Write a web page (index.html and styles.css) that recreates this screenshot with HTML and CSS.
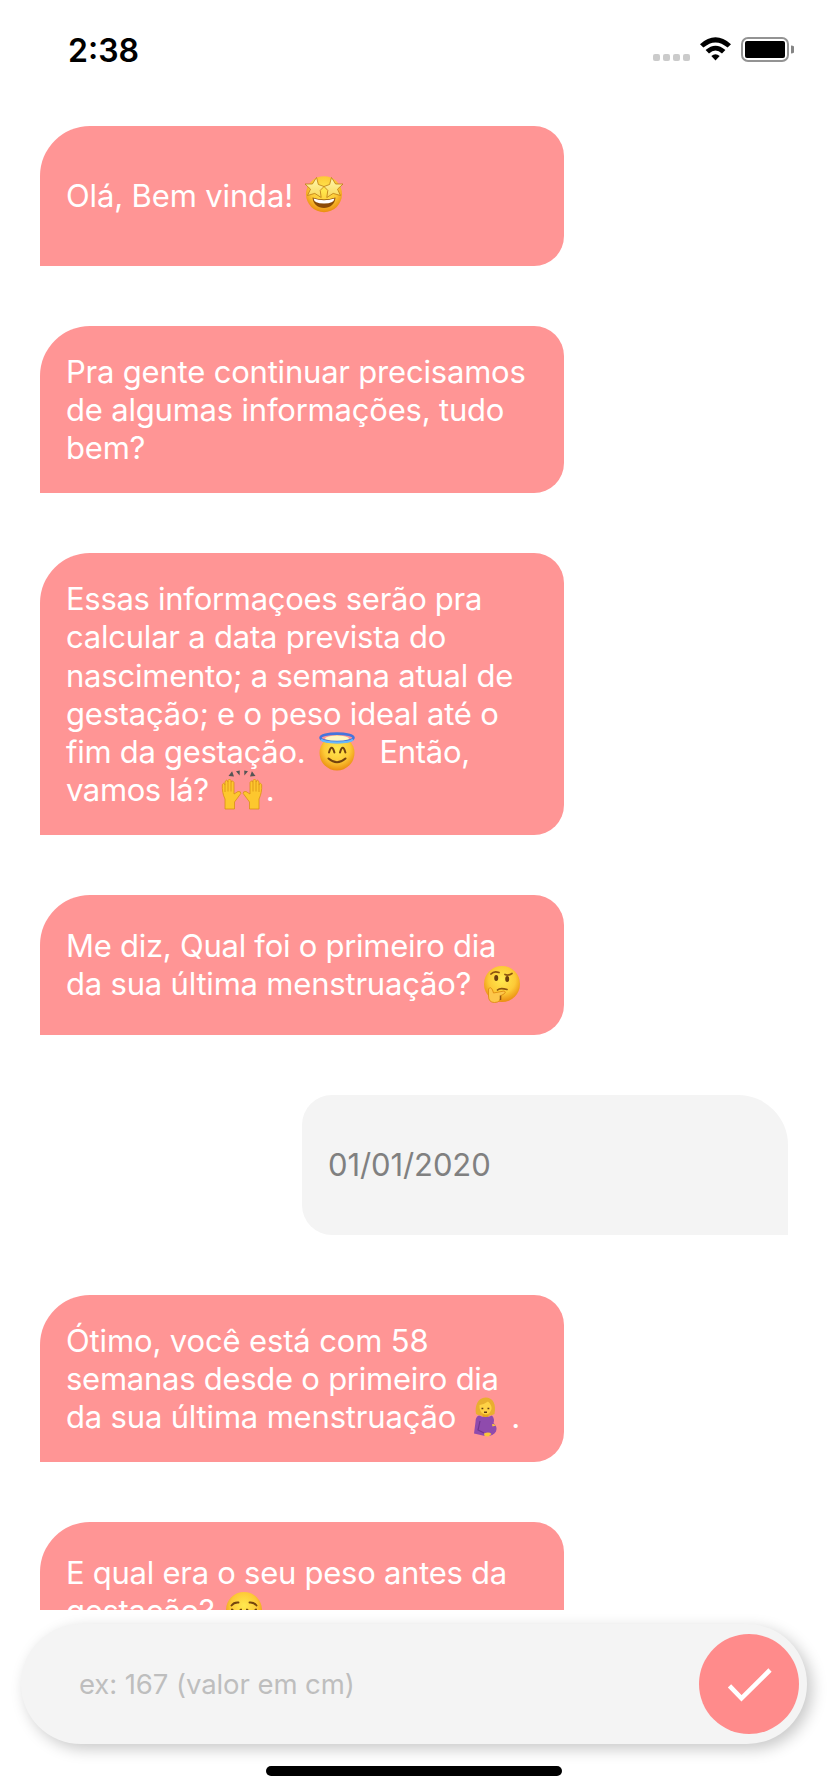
FILE: index.html
```html
<!DOCTYPE html>
<html lang="pt-BR">
<head>
<meta charset="utf-8">
<title>Chat</title>
<link rel="stylesheet" href="styles.css">
</head>
<body>
<div class="screen">
  <header class="status">
    <span class="time">2:38</span>
    <svg class="status-icons" width="142" height="28" viewBox="0 0 142 28">
      <g fill="#cbcbcb"><rect x="1" y="18" width="7" height="7" rx="2"/><rect x="11" y="18" width="7" height="7" rx="2"/><rect x="21" y="18" width="7" height="7" rx="2"/><rect x="31" y="18" width="7" height="7" rx="2"/></g>
      <path d="M48 8.2Q63.500 -5.600 79 8.200L75.600 11.600Q63.500 1.200 51.400 11.600Z" fill="#000"/>
      <path d="M53.600 14Q63.500 5.400 73.400 14L70 17.400Q63.500 11.800 57 17.400Z" fill="#000"/>
      <path d="M59.300 20Q63.500 16.400 67.700 20L63.500 24.400Z" fill="#000"/>
      <rect x="90" y="2" width="46" height="23" rx="6" fill="none" stroke="#939393" stroke-width="2"/>
      <rect x="93" y="5" width="40" height="17" rx="2" fill="#000"/>
      <path d="M139 9.500a4 4 0 0 1 0 8z" fill="#858585"/>
    </svg>
  </header>

  <main class="chat">
    <div class="bubble bot">
      <p class="line"><span class="l1">Olá, Bem vinda!</span><svg class="emoji e-star" viewBox="0 0 40 40" role="img" aria-label="🤩">
        <defs><radialGradient id="face" cx=".5" cy=".38" r=".62"><stop offset="0" stop-color="#ffe94f"/><stop offset=".6" stop-color="#fdca37"/><stop offset="1" stop-color="#ea8d10"/></radialGradient>
        <linearGradient id="star" x1="0" y1="0" x2="0" y2="1"><stop offset="0" stop-color="#fff9b0"/><stop offset="1" stop-color="#f9d858"/></linearGradient></defs>
        <circle cx="20" cy="18.200" r="18" fill="url(#face)"/>
        <path d="M8.500 21.500Q20 25.500 31.500 21.500C31 28 26 32 20 32S9 28 8.500 21.500Z" fill="#8b4b07"/>
        <path d="M9.500 22.600Q20 26 30.500 22.600Q30 27.600 20 27.600T9.500 22.600Z" fill="#fff"/>
        <path d="M12.500 1.500L14.400 8.500L20 10.500L16.200 14.400L17.200 21.500L10.800 17.400L3.500 19.500L6.500 13.200L1 8L8.400 8Z" fill="url(#star)" stroke="#bd7b12" stroke-width=".8"/>
        <path d="M27.500 1.500L25.600 8.500L20 10.500L23.800 14.400L22.800 21.500L29.200 17.400L36.500 19.500L33.500 13.200L39 8L31.600 8Z" fill="url(#star)" stroke="#bd7b12" stroke-width=".8"/>
      </svg></p>
    </div>

    <div class="bubble bot tall3">
      <p class="line l2">Pra gente continuar precisamos</p>
      <p class="line l3">de algumas informações, tudo</p>
      <p class="line l4">bem?</p>
    </div>

    <div class="bubble bot tall6">
      <p class="line l5">Essas informaçoes serão pra</p>
      <p class="line l6">calcular a data prevista do</p>
      <p class="line l7">nascimento; a semana atual de</p>
      <p class="line l8">gestação; e o peso ideal até o</p>
      <p class="line"><span class="l9">fim da gestação.</span><svg class="emoji e-halo" viewBox="0 0 40 40" role="img" aria-label="😇">
        <circle cx="20" cy="21" r="17.500" fill="url(#face)"/>
        <ellipse cx="20" cy="6.500" rx="12" ry="3" fill="#fff6c0"/>
        <ellipse cx="20" cy="5.800" rx="16.500" ry="4.200" fill="none" stroke="#4674dc" stroke-width="2.600"/>
        <path d="M4 7.500C8 11.500 32 11.500 36 7.500" fill="none" stroke="#68b9fb" stroke-width="2.200"/>
        <path d="M12 20.500Q14.700 11 17.400 20.500M23 20.500Q25.700 11 28.400 20.500M11.500 26.500Q20 34 28.500 26.500" fill="none" stroke="#73420e" stroke-width="2" stroke-linecap="round"/>
      </svg><span class="l10">Então,</span></p>
      <p class="line"><span class="l11">vamos lá?</span><svg class="emoji e-hands" viewBox="0 0 40 40" role="img" aria-label="🙌">
        <g fill="#555"><path d="M6.500 6l3.600-4.800L12 6.600zM14 1.200l3.800-.8-.2 5zM26 1.200l-3.800-.8.2 5zM33.500 6l-3.600-4.800L28 6.600z"/></g>
        <g id="hand"><path d="M3 39V29C1 25 0 20 .3 14.500Q1.600 12 3 14.500V12Q4.500 8.400 6 12V10.500Q7.500 7.500 9 10.500V12Q10.500 9.500 12 12.500V24L16 21.500Q19 21 18.800 23.500L12.500 32V39Z" fill="#fdc72e" stroke="#d99015" stroke-width=".8"/>
        <path d="M3 14V22M6 12V21.500M9 12V21.500" stroke="#d99015" stroke-width=".8"/></g>
        <use href="#hand" transform="matrix(-1 0 0 1 40 0)"/>
      </svg><span>.</span></p>
    </div>

    <div class="bubble bot">
      <p class="line l12">Me diz, Qual foi o primeiro dia</p>
      <p class="line"><span class="l13">da sua última menstruação?</span><svg class="emoji e-think" viewBox="0 0 40 40" role="img" aria-label="🤔">
        <circle cx="20" cy="20" r="18" fill="url(#face)"/>
        <ellipse cx="14.200" cy="14" rx="2" ry="3" fill="#6b3d0c"/><ellipse cx="25.200" cy="15" rx="2" ry="3" fill="#6b3d0c"/>
        <path d="M9 10Q12 6.500 17 8.500M23 10.500Q26 12 30 9.500M15.500 26Q18 23.500 25 25.500" fill="none" stroke="#8d5410" stroke-width="1.700" stroke-linecap="round"/>
        <path d="M6.500 25Q8.500 22 10.500 26L11.500 29L22 27Q25 27.500 22 30L19 31.500Q19 38.500 12.500 38.500Q6.500 38.500 6.500 32Z" fill="#fdc74b" stroke="#df8c12" stroke-width=".9"/>
        <path d="M18.500 31.500V36" stroke="#955411" stroke-width="1.500"/>
      </svg></p>
    </div>

    <div class="bubble user">
      <p class="line l14">01/01/2020</p>
    </div>

    <div class="bubble bot tall3">
      <p class="line l15">Ótimo, você está com 58</p>
      <p class="line l16">semanas desde o primeiro dia</p>
      <p class="line"><span class="l17">da sua última menstruação</span><svg class="emoji e-preg" viewBox="0 0 40 40" role="img" aria-label="🤰">
        <path d="M10 17C8.500 9 12 .5 19.500 .5C27 .5 30.500 7 28.500 17Q24 20 19.500 18Q14 20 10 17Z" fill="#e9af2f"/>
        <path d="M16.500 15H22.500V21H16.500Z" fill="#e6a71c"/>
        <path d="M13.500 8Q19 7 22 4.500Q26 8 25.500 12Q24 17.500 19.500 17.500T13.500 11Z" fill="#ffd246"/>
        <path d="M15.500 11.500h1.800M21.500 11.500h1.800M18 15.200h3" stroke="#633a12" stroke-width="1.400"/>
        <path d="M13 18.500Q19.500 21.500 26 18.500Q29 22 27.500 26Q32 30 30 34.500Q27 39.500 19 39L8 36.500L9.500 25Q9.500 19.500 13 18.500Z" fill="#8f4bad"/>
        <path d="M14 24Q13 29 12 33L18 36" fill="none" stroke="#6f358e" stroke-width="1.200"/>
        <path d="M26 27.200q2-.8 4 1.300l-3.500 1zM18 36.500q5-2 7.500.5l-3 2.500-4-.5z" fill="#fbc53a"/>
      </svg><span>.</span></p>
    </div>

    <div class="bubble bot">
      <p class="line l18">E qual era o seu peso antes da</p>
      <p class="line"><span class="l19">gestação?</span><svg class="emoji e-calm" viewBox="0 0 40 40" role="img" aria-label="😌">
        <circle cx="20" cy="19" r="18" fill="url(#face)"/>
        <path d="M7.500 14.500Q10 11 14.500 11.500M32.500 14.500Q30 11 25.500 11.500M8 18.500Q13 23.500 17 18.500M23 18.500Q27 23.500 32 18.500M13 27.500Q20 32 27 27.500" fill="none" stroke="#74450e" stroke-width="1.900" stroke-linecap="round"/>
      </svg></p>
    </div>
  </main>

  <footer class="footer">
    <div class="composer">
      <span class="placeholder">ex: 167 (valor em cm)</span>
      <div class="send"><svg width="100" height="100" viewBox="0 0 100 100"><path d="M30.500 51.800L42.500 64.300L71 36" fill="none" stroke="#fff" stroke-width="4.600"/></svg></div>
    </div>
    <div class="home"></div>
  </footer>
</div>
</body>
</html>
```
FILE: styles.css
```css
* { box-sizing: border-box; }
body { margin: 0; background: #fff; font-family: Inter, "Liberation Sans", sans-serif; }
p { margin: 0; }
.screen { width: 828px; height: 1792px; display: flex; flex-direction: column; overflow: hidden; }
.status { height: 126px; flex: none; padding: 31px 34px 0 68px; display: flex; justify-content: space-between; align-items: flex-start; }
.time { font-size: 32px; font-weight: 600; line-height: 39px; }
.status-icons { margin-top: 5px; }
.chat { height: 1484px; flex: none; overflow: hidden; padding: 0 40px; display: flex; flex-direction: column; align-items: flex-start; gap: 60px; }
.bubble { flex: none; width: 524px; height: 140px; padding: 0 26px; display: flex; flex-direction: column; justify-content: center; font-size: 31px; line-height: 38.200px; }
.bot { background: #ff9595; color: #fff; border-radius: 50px 30px 30px 0; }
.user { align-self: flex-end; width: 486px; background: #f4f4f4; color: #808080; border-radius: 30px 50px 0 30px; }
.tall3 { height: 167px; padding-top: 1.500px; }
.tall6 { height: 282px; padding-top: 1.500px; }
.line { height: 38.200px; white-space: nowrap; }

/* per-line tracking */
.l1, .l15 { letter-spacing: -.14px; }
.l2, .l3, .l4, .l13 { letter-spacing: -.2px; }
.l6, .l7, .l8 { letter-spacing: -.22px; }
.l5, .l9, .l10, .l19 { letter-spacing: -.29px; }
.l11 { letter-spacing: -.4px; }
.l12, .l16, .l18 { letter-spacing: -.26px; }
.l14 { letter-spacing: -.1px; }
.l17 { letter-spacing: -.18px; }

.emoji { width: 40px; height: 40px; margin: -10px 0; vertical-align: 1px; overflow: visible; }
.e-star { margin-left: 11px; }
.e-halo { margin-left: 12px; margin-right: 22px; }
.e-hands { margin-left: 13px; margin-right: 4px; }
.e-think { margin-left: 11px; }
.e-preg { margin-left: 10px; margin-right: 5px; }
.e-calm { margin-left: 10px; }
.footer { flex: 1; padding: 14px 20px 0; display: flex; flex-direction: column; align-items: center; gap: 22px; }
.composer { width: 786px; height: 120px; border-radius: 60px; background: #f4f4f4; padding: 0 8px 0 58px; display: flex; align-items: center; justify-content: space-between; box-shadow: 5px 5px 15px rgba(0, 0, 0, .22); }
.placeholder { font-size: 27.500px; letter-spacing: -.08px; color: #bebebe; }
.send { width: 100px; height: 100px; border-radius: 50%; background: #ff8b8b; }
.send svg { display: block; }
.home { width: 296px; height: 10px; border-radius: 5px; background: #000; }
```
